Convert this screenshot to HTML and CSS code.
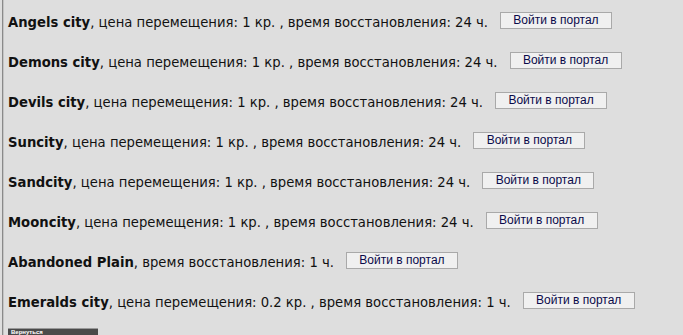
FILE: index.html
```html
<!DOCTYPE html>
<html lang="ru">
<head>
  <meta charset="UTF-8" />
  <title>Порталы</title>
  <link rel="stylesheet" href="styles.css">
</head>
<body>
  <div class="frame">
    <div class="row"><span><b>Angels city</b>, цена перемещения: 1 кр. , время восстановления: 24 ч.</span><button>Войти в портал</button></div>
    <div class="row"><span><b>Demons city</b>, цена перемещения: 1 кр. , время восстановления: 24 ч.</span><button>Войти в портал</button></div>
    <div class="row"><span><b>Devils city</b>, цена перемещения: 1 кр. , время восстановления: 24 ч.</span><button>Войти в портал</button></div>
    <div class="row"><span><b>Suncity</b>, цена перемещения: 1 кр. , время восстановления: 24 ч.</span><button>Войти в портал</button></div>
    <div class="row"><span><b>Sandcity</b>, цена перемещения: 1 кр. , время восстановления: 24 ч.</span><button>Войти в портал</button></div>
    <div class="row"><span><b>Mooncity</b>, цена перемещения: 1 кр. , время восстановления: 24 ч.</span><button>Войти в портал</button></div>
    <div class="row"><span><b>Abandoned Plain</b>, время восстановления: 1 ч.</span><button>Войти в портал</button></div>
    <div class="row"><span><b>Emeralds city</b>, цена перемещения: 0.2 кр. , время восстановления: 1 ч.</span><button>Войти в портал</button></div>
    <div class="bottom-btn">Вернуться</div>
  </div>
</body>
</html>
```

FILE: styles.css
```css
body {
  margin: 0;
  padding: 0;
  background-color: #dedede;
  font-family: "DejaVu Sans", Verdana, sans-serif;
  font-size: 13.2px;
  color: #111;
}

.frame {
  margin-left: 2px;
  border-left: 1px solid #8a8a8a;
  box-shadow: inset 1px 0 0 #c4c4c4;
  padding-left: 5px;
  min-height: 335px;
  overflow: hidden;
}

.row {
  height: 40px;
  display: flex;
  align-items: center;
}

.row span {
  padding-top: 4px;
}

.row button {
  margin-left: 12px;
  width: 112px;
  height: 17px;
  padding: 0;
  background: #f0f0f0;
  border: 1px solid #a9a9a9;
  color: #0a0a4a;
  font-family: "Liberation Sans", Tahoma, sans-serif;
  font-size: 12px;
  line-height: 14px;
}

.bottom-btn {
  margin-top: 8px;
  width: 87px;
  height: 6px;
  background: #4a4a4a;
  border-top: 1px solid #999;
  color: #fff;
  font-family: "Liberation Sans", Tahoma, sans-serif;
  font-size: 6px;
  font-weight: bold;
  line-height: 6px;
  white-space: nowrap;
  padding-left: 3px;
}
```
